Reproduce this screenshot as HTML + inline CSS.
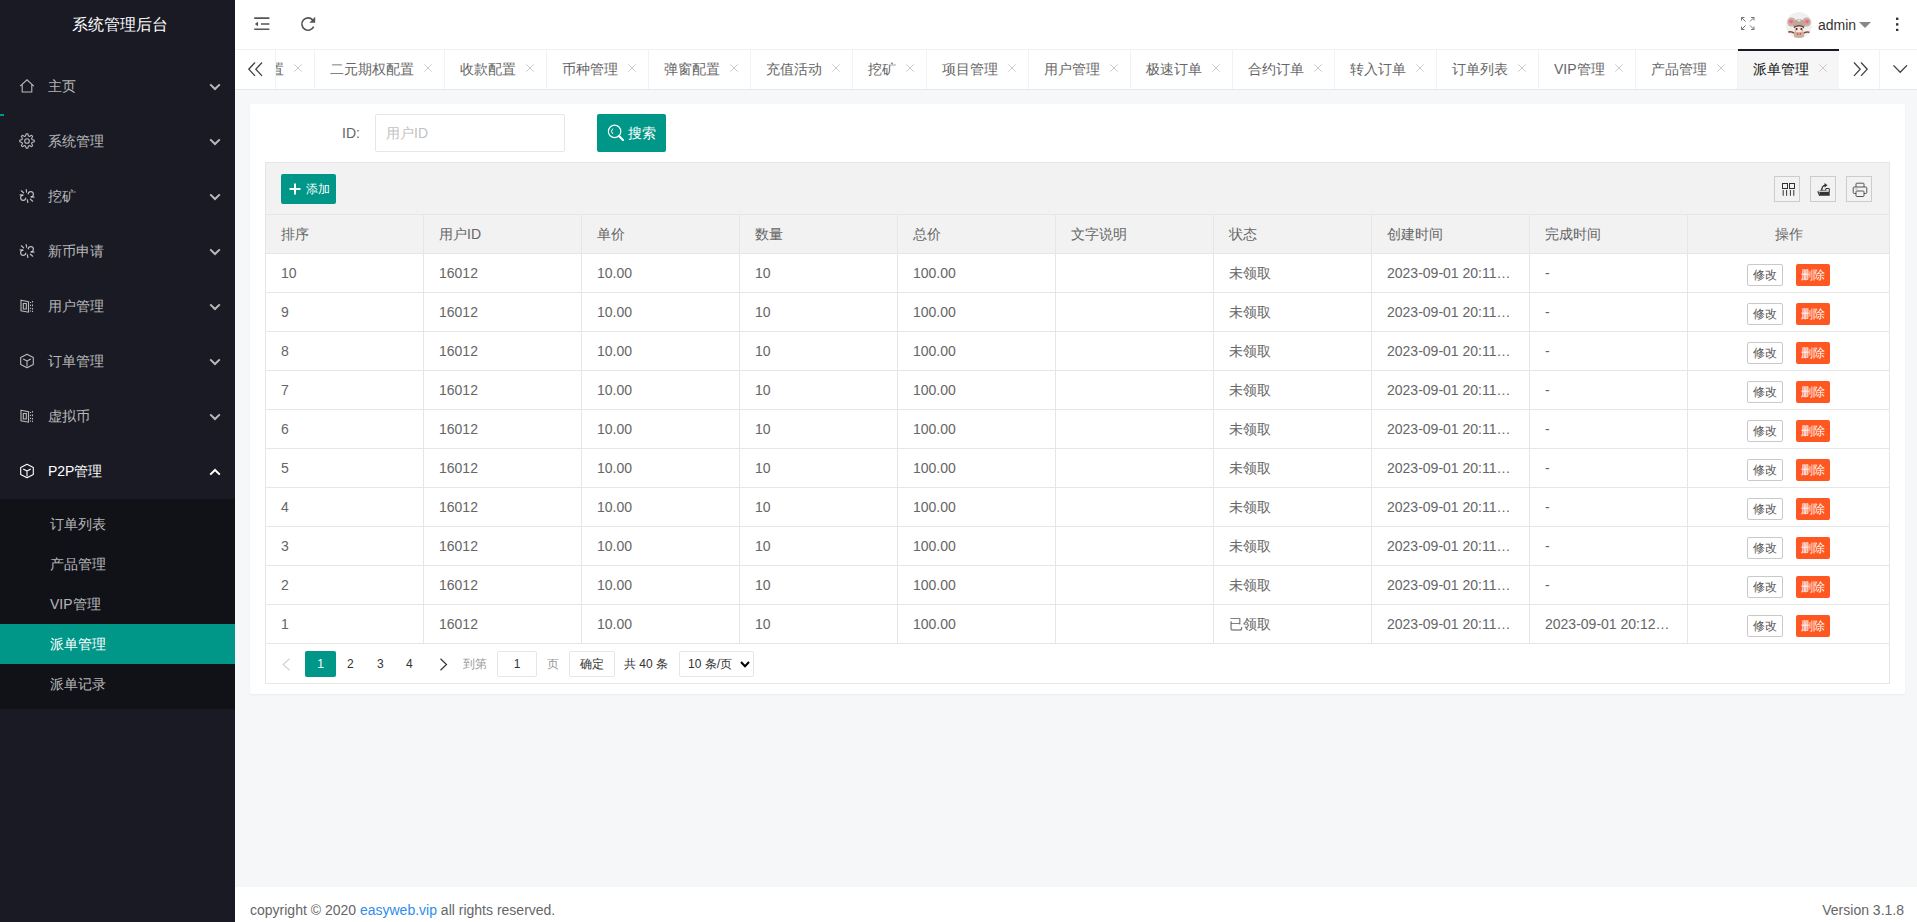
<!DOCTYPE html>
<html><head><meta charset="utf-8">
<style>
*{box-sizing:border-box;margin:0;padding:0}
html,body{width:1917px;height:922px;overflow:hidden;font-family:"Liberation Sans",sans-serif;font-size:14px;color:#666;background:#f5f7f9;position:relative}
svg{display:block}
#side{position:absolute;left:0;top:0;width:235px;height:922px;background:#191a23;overflow:hidden}
#logo{position:absolute;left:0;top:0;width:240px;height:50px;line-height:50px;text-align:center;color:#fff;font-size:16px}
.ni{position:absolute;left:0;width:235px;height:55px;line-height:55px;color:rgba(255,255,255,.7);padding-left:48px}
.ni svg.ic{position:absolute;left:19px;top:19px}
.ni .chev{position:absolute;left:209px;top:24px}
.ni.open{color:#fff}
#dd{position:absolute;left:0;top:499px;width:235px;height:210px;background:rgba(0,0,0,.3);padding:5px 0}
#dd div{height:40px;line-height:40px;padding-left:50px;color:rgba(255,255,255,.7)}
#dd div.on{background:#009688;color:#fff}
#navbar{position:absolute;left:0;top:114px;width:4px;height:2px;background:#009688}
#header{position:absolute;left:235px;top:0;width:1682px;height:50px;background:#fff}
#header .hi{position:absolute}
#tabs{position:absolute;left:235px;top:49px;width:1682px;height:41px;background:#fff;border-top:1px solid #f1f1f1;border-bottom:1px solid #e6e7ea}
#tabwrap{position:absolute;left:41px;top:0;width:1563px;height:39px;overflow:hidden}
.tab{position:absolute;top:0;height:39px;line-height:39px;border-right:1px solid #f2f2f2;padding-left:15px;white-space:nowrap;color:#666;overflow:hidden}
.tab .x{position:absolute;right:12px;top:14px;color:#c6c6c6}
.tab.part .xx .x{position:static;margin-top:16px}
.tab.act{background:#f6f6f6;color:#111}

.tbtn{position:absolute;top:0;height:39px}
#body{position:absolute;left:235px;top:90px;width:1682px;height:797px;background:#f5f7f9}
#card{position:absolute;left:250px;top:104px;width:1655px;height:590px;background:#fff;border-radius:2px;box-shadow:0 1px 2px rgba(0,0,0,.05)}
#lbl{position:absolute;left:342px;top:114px;height:38px;line-height:38px;color:#666}
#inp{position:absolute;left:375px;top:114px;width:190px;height:38px;border:1px solid #e6e6e6;border-radius:2px;line-height:36px;padding-left:10px;color:#c2c2c2}
#sbtn{position:absolute;left:597px;top:114px;width:69px;height:38px;background:#009688;border-radius:2px;color:#fff;line-height:38px}
#tbl{position:absolute;left:265px;top:162px;width:1625px;height:522px;border:1px solid #e6e6e6;background:#fff}
#tool{position:absolute;left:0;top:0;width:1623px;height:52px;background:#f2f2f2;border-bottom:1px solid #e6e6e6}
#addbtn{position:absolute;left:15px;top:11px;width:55px;height:30px;background:#009688;border-radius:2px;color:#fff;font-size:12px;line-height:30px}
.tico{position:absolute;top:13px;width:26px;height:26px;border:1px solid #ccc;color:#333}
.tr{position:absolute;left:0;width:1623px;height:39px;border-bottom:1px solid #e6e6e6}
.tr.th{background:#f2f2f2}
.c{position:absolute;top:0;height:38px;line-height:38px;padding:0 15px;border-right:1px solid #e6e6e6;white-space:nowrap;overflow:hidden;text-overflow:ellipsis;color:#666}
.c:nth-child(10){border-right:none}
.ctr{text-align:center}
.bx{display:inline-block;height:22px;line-height:20px;padding:0 5px;font-size:12px;border-radius:2px;vertical-align:middle;margin-top:2px}
.bp{border:1px solid #c9c9c9;color:#555;background:#fff}
.bd{background:#ff5722;color:#fff;border:none;line-height:22px;margin-left:13px}
#page{position:absolute;left:0;top:481px;width:1622px;height:40px;font-size:12px;color:#333}
#page .p{position:absolute}
#footer{position:absolute;left:235px;top:887px;width:1682px;height:44px;background:#fff;color:#666;line-height:46px;padding:0 15px}
#footer a{color:#2e8ded;text-decoration:none}
</style></head><body>
<div id="side">
  <div id="logo">系统管理后台</div>
  <div class="ni" style="top:59px"><svg class="ic" width="16" height="16" viewBox="0 0 16 16"><path d="M1.2 8.2 L8 1.8 L14.8 8.2 M3.2 6.8 V14 H12.8 V6.8" fill="none" stroke="currentColor" stroke-width="1.1"/></svg><span>主页</span><svg class="chev" width="12" height="8" viewBox="0 0 12 8"><path d="M1.2 1.4 L6 6 L10.8 1.4" fill="none" stroke="currentColor" stroke-width="2"/></svg></div><div class="ni" style="top:114px"><svg class="ic" width="16" height="16" viewBox="0 0 16 16"><path d="M7.28 0.74 L8.72 0.74 L9.51 3.02 L10.45 3.41 L12.63 2.36 L13.64 3.37 L12.59 5.55 L12.98 6.49 L15.26 7.28 L15.26 8.72 L12.98 9.51 L12.59 10.45 L13.64 12.63 L12.63 13.64 L10.45 12.59 L9.51 12.98 L8.72 15.26 L7.28 15.26 L6.49 12.98 L5.55 12.59 L3.37 13.64 L2.36 12.63 L3.41 10.45 L3.02 9.51 L0.74 8.72 L0.74 7.28 L3.02 6.49 L3.41 5.55 L2.36 3.37 L3.37 2.36 L5.55 3.41 L6.49 3.02 Z" fill="none" stroke="currentColor" stroke-width="1.1" stroke-linejoin="round"/><circle cx="8" cy="8" r="2.3" fill="none" stroke="currentColor" stroke-width="1.1"/></svg><span>系统管理</span><svg class="chev" width="12" height="8" viewBox="0 0 12 8"><path d="M1.2 1.4 L6 6 L10.8 1.4" fill="none" stroke="currentColor" stroke-width="2"/></svg></div><div class="ni" style="top:169px"><svg class="ic" width="16" height="16" viewBox="0 0 16 16"><g fill="none" stroke="currentColor" stroke-width="1.2" stroke-linecap="round"><path d="M9.2 5.8 A2.6 2.6 0 1 1 12 8.8"/><path d="M6.8 10.2 A2.6 2.6 0 1 1 4 7.2"/><path d="M7.2 1.5 L7.6 4.2"/><path d="M2.3 2.8 L4.6 4.8"/><path d="M1 6.8 L3.6 7"/><path d="M8.8 14.5 L8.4 11.8"/><path d="M13.7 13.2 L11.4 11.2"/><path d="M15 9.2 L12.4 9"/></g></svg><span>挖矿</span><svg class="chev" width="12" height="8" viewBox="0 0 12 8"><path d="M1.2 1.4 L6 6 L10.8 1.4" fill="none" stroke="currentColor" stroke-width="2"/></svg></div><div class="ni" style="top:224px"><svg class="ic" width="16" height="16" viewBox="0 0 16 16"><g fill="none" stroke="currentColor" stroke-width="1.2" stroke-linecap="round"><path d="M9.2 5.8 A2.6 2.6 0 1 1 12 8.8"/><path d="M6.8 10.2 A2.6 2.6 0 1 1 4 7.2"/><path d="M7.2 1.5 L7.6 4.2"/><path d="M2.3 2.8 L4.6 4.8"/><path d="M1 6.8 L3.6 7"/><path d="M8.8 14.5 L8.4 11.8"/><path d="M13.7 13.2 L11.4 11.2"/><path d="M15 9.2 L12.4 9"/></g></svg><span>新币申请</span><svg class="chev" width="12" height="8" viewBox="0 0 12 8"><path d="M1.2 1.4 L6 6 L10.8 1.4" fill="none" stroke="currentColor" stroke-width="2"/></svg></div><div class="ni" style="top:279px"><svg class="ic" width="16" height="16" viewBox="0 0 16 16"><g fill="none" stroke="currentColor" stroke-width="1.1"><path d="M2 2.2 L9.5 3.8 V14.2 L2 12.8 Z"/><path d="M4.3 5.5 H7.3 V11 H4.3 Z"/><path d="M11.5 4 V5 M11.5 6.8 V8 M11.5 9.8 V11 M11.5 12.6 V13.6 M13.5 3 V4.6 M13.5 6.6 V8.3 M13.5 10 V11.5 M13.5 12.8 V14"/></g></svg><span>用户管理</span><svg class="chev" width="12" height="8" viewBox="0 0 12 8"><path d="M1.2 1.4 L6 6 L10.8 1.4" fill="none" stroke="currentColor" stroke-width="2"/></svg></div><div class="ni" style="top:334px"><svg class="ic" width="16" height="16" viewBox="0 0 16 16"><g fill="none" stroke="currentColor" stroke-width="1.1" stroke-linejoin="round"><path d="M8 1.2 L14.3 4.5 V11.5 L8 14.8 L1.7 11.5 V4.5 Z"/><path d="M4.2 6 L8 8 L11.8 6 M8 8 V13.5"/></g></svg><span>订单管理</span><svg class="chev" width="12" height="8" viewBox="0 0 12 8"><path d="M1.2 1.4 L6 6 L10.8 1.4" fill="none" stroke="currentColor" stroke-width="2"/></svg></div><div class="ni" style="top:389px"><svg class="ic" width="16" height="16" viewBox="0 0 16 16"><g fill="none" stroke="currentColor" stroke-width="1.1"><path d="M2 2.2 L9.5 3.8 V14.2 L2 12.8 Z"/><path d="M4.3 5.5 H7.3 V11 H4.3 Z"/><path d="M11.5 4 V5 M11.5 6.8 V8 M11.5 9.8 V11 M11.5 12.6 V13.6 M13.5 3 V4.6 M13.5 6.6 V8.3 M13.5 10 V11.5 M13.5 12.8 V14"/></g></svg><span>虚拟币</span><svg class="chev" width="12" height="8" viewBox="0 0 12 8"><path d="M1.2 1.4 L6 6 L10.8 1.4" fill="none" stroke="currentColor" stroke-width="2"/></svg></div><div class="ni open" style="top:444px"><svg class="ic" width="16" height="16" viewBox="0 0 16 16"><g fill="none" stroke="currentColor" stroke-width="1.1" stroke-linejoin="round"><path d="M8 1.2 L14.3 4.5 V11.5 L8 14.8 L1.7 11.5 V4.5 Z"/><path d="M4.2 6 L8 8 L11.8 6 M8 8 V13.5"/></g></svg><span>P2P管理</span><svg class="chev" width="12" height="8" viewBox="0 0 12 8"><path d="M1.2 6.6 L6 2 L10.8 6.6" fill="none" stroke="currentColor" stroke-width="2"/></svg></div>
  <div id="dd"><div>订单列表</div><div>产品管理</div><div>VIP管理</div><div class="on">派单管理</div><div>派单记录</div></div>
  <div id="navbar"></div>
</div>
<div id="header">
  <svg class="hi" style="left:19px;top:16px" width="16" height="16" viewBox="0 0 16 16"><g stroke="#555" stroke-width="1.6" fill="none"><path d="M0.2 2.1 H15.4 M7 8 H15.4 M0.2 13.3 H15.4"/></g><path d="M4 5.8 V10.2 L0.9 8 Z" fill="#555"/></svg>
  <svg class="hi" style="left:65px;top:16px" width="17" height="17" viewBox="0 0 17 17"><path d="M13.7 10.7 A6.2 6.2 0 1 1 12.7 3.9" fill="none" stroke="#555" stroke-width="1.6"/><path d="M15.2 0.8 L15.2 6.8 L9.4 6.8 Z" fill="#555"/></svg>
  <svg class="hi" style="left:1506px;top:17px" width="14" height="14" viewBox="0 0 14 14"><g stroke="#777" stroke-width="1" fill="none"><path d="M0.5 3.5 V0.5 H3.5 M0.5 0.5 L4.5 4.5"/><path d="M10 0.5 H13 V3.5 M13 0.5 L9 4.5"/><path d="M0.5 9.5 V12.5 H3.5 M0.5 12.5 L4.5 8.5"/><path d="M13 9.5 V12.5 H10 M13 12.5 L9 8.5"/></g></svg>
  <div class="hi" style="left:1551px;top:12px;width:26px;height:26px;border-radius:50%;background:#f1f0f0;overflow:hidden">
    <svg width="26" height="26" viewBox="0 0 26 26"><ellipse cx="5.6" cy="10" rx="4.3" ry="4.6" fill="#c9aea3"/><ellipse cx="20.6" cy="10" rx="4.3" ry="4.6" fill="#c9aea3"/><ellipse cx="5.2" cy="9.6" rx="2" ry="1.8" fill="#f06a8a"/><ellipse cx="21" cy="9.6" rx="2" ry="1.8" fill="#f06a8a"/><rect x="8" y="19" width="10" height="7.5" rx="2" fill="#c9aea3"/><ellipse cx="13" cy="12.5" rx="6" ry="5.5" fill="#c3a597"/><ellipse cx="13" cy="8.5" rx="1.6" ry="1" fill="#f3e6e2"/><path d="M7.8 14.5 Q13 11.5 18.2 14.5 L18 16 H8 Z" fill="#6a4a3e"/><ellipse cx="13" cy="17.4" rx="4.6" ry="2.8" fill="#f6e4de"/><circle cx="10.6" cy="17" r="1.05" fill="#3a2420"/><circle cx="15.4" cy="17" r="1.05" fill="#3a2420"/><circle cx="9.6" cy="18.6" r="0.9" fill="#f5a080"/><circle cx="16.4" cy="18.6" r="0.9" fill="#f5a080"/><path d="M2.3 20 Q5 19.4 8 21 M23.7 20.4 Q21 19.4 18 21" stroke="#7a5040" stroke-width="1.5" fill="none"/><circle cx="3" cy="20.6" r="0.7" fill="#e03030"/><circle cx="23.2" cy="21" r="0.7" fill="#e03030"/><path d="M11 20.5 L13 22 L15 20.5 L15 23 L13 22 L11 23 Z" fill="#f04a20"/></svg>
  </div>
  <div class="hi" style="left:1583px;top:0;line-height:50px;color:#333;font-size:14px">admin</div>
  <svg class="hi" style="left:1624px;top:22px" width="12" height="6" viewBox="0 0 12 6"><path d="M0 0 H12 L6 6 Z" fill="#888"/></svg>
  <svg class="hi" style="left:1661px;top:17px" width="3" height="14" viewBox="0 0 3 14"><g fill="#333"><rect x="0" y="0.6" width="2.4" height="2.4"/><rect x="0" y="6.2" width="2.4" height="2.4"/><rect x="0" y="11.8" width="2.4" height="2.4"/></g></svg>
</div>
<div id="body"></div>
<div id="tabs">
  <div class="tbtn" style="left:0;width:41px;border-right:1px solid #f2f2f2"><svg style="position:absolute;left:13px;top:12px" width="15" height="15" viewBox="0 0 15 15"><path d="M7 0.5 L0.8 7.2 L7 13.9 M14 0.5 L7.8 7.2 L14 13.9" fill="none" stroke="#444" stroke-width="1.3"/></svg></div>
  <div id="tabwrap"><div class="tab" style="left:-63px;width:102px"><span class="tt">二元配置</span><svg class="x" width="8" height="8" viewBox="0 0 8 8"><path d="M0.3 0.3 L7.7 7.7 M7.7 0.3 L0.3 7.7" stroke="currentColor" stroke-width="0.9" fill="none"/></svg></div><div class="tab" style="left:39px;width:130px"><span class="tt">二元期权配置</span><svg class="x" width="8" height="8" viewBox="0 0 8 8"><path d="M0.3 0.3 L7.7 7.7 M7.7 0.3 L0.3 7.7" stroke="currentColor" stroke-width="0.9" fill="none"/></svg></div><div class="tab" style="left:169px;width:102px"><span class="tt">收款配置</span><svg class="x" width="8" height="8" viewBox="0 0 8 8"><path d="M0.3 0.3 L7.7 7.7 M7.7 0.3 L0.3 7.7" stroke="currentColor" stroke-width="0.9" fill="none"/></svg></div><div class="tab" style="left:271px;width:102px"><span class="tt">币种管理</span><svg class="x" width="8" height="8" viewBox="0 0 8 8"><path d="M0.3 0.3 L7.7 7.7 M7.7 0.3 L0.3 7.7" stroke="currentColor" stroke-width="0.9" fill="none"/></svg></div><div class="tab" style="left:373px;width:102px"><span class="tt">弹窗配置</span><svg class="x" width="8" height="8" viewBox="0 0 8 8"><path d="M0.3 0.3 L7.7 7.7 M7.7 0.3 L0.3 7.7" stroke="currentColor" stroke-width="0.9" fill="none"/></svg></div><div class="tab" style="left:475px;width:102px"><span class="tt">充值活动</span><svg class="x" width="8" height="8" viewBox="0 0 8 8"><path d="M0.3 0.3 L7.7 7.7 M7.7 0.3 L0.3 7.7" stroke="currentColor" stroke-width="0.9" fill="none"/></svg></div><div class="tab" style="left:577px;width:74px"><span class="tt">挖矿</span><svg class="x" width="8" height="8" viewBox="0 0 8 8"><path d="M0.3 0.3 L7.7 7.7 M7.7 0.3 L0.3 7.7" stroke="currentColor" stroke-width="0.9" fill="none"/></svg></div><div class="tab" style="left:651px;width:102px"><span class="tt">项目管理</span><svg class="x" width="8" height="8" viewBox="0 0 8 8"><path d="M0.3 0.3 L7.7 7.7 M7.7 0.3 L0.3 7.7" stroke="currentColor" stroke-width="0.9" fill="none"/></svg></div><div class="tab" style="left:753px;width:102px"><span class="tt">用户管理</span><svg class="x" width="8" height="8" viewBox="0 0 8 8"><path d="M0.3 0.3 L7.7 7.7 M7.7 0.3 L0.3 7.7" stroke="currentColor" stroke-width="0.9" fill="none"/></svg></div><div class="tab" style="left:855px;width:102px"><span class="tt">极速订单</span><svg class="x" width="8" height="8" viewBox="0 0 8 8"><path d="M0.3 0.3 L7.7 7.7 M7.7 0.3 L0.3 7.7" stroke="currentColor" stroke-width="0.9" fill="none"/></svg></div><div class="tab" style="left:957px;width:102px"><span class="tt">合约订单</span><svg class="x" width="8" height="8" viewBox="0 0 8 8"><path d="M0.3 0.3 L7.7 7.7 M7.7 0.3 L0.3 7.7" stroke="currentColor" stroke-width="0.9" fill="none"/></svg></div><div class="tab" style="left:1059px;width:102px"><span class="tt">转入订单</span><svg class="x" width="8" height="8" viewBox="0 0 8 8"><path d="M0.3 0.3 L7.7 7.7 M7.7 0.3 L0.3 7.7" stroke="currentColor" stroke-width="0.9" fill="none"/></svg></div><div class="tab" style="left:1161px;width:102px"><span class="tt">订单列表</span><svg class="x" width="8" height="8" viewBox="0 0 8 8"><path d="M0.3 0.3 L7.7 7.7 M7.7 0.3 L0.3 7.7" stroke="currentColor" stroke-width="0.9" fill="none"/></svg></div><div class="tab" style="left:1263px;width:97px"><span class="tt">VIP管理</span><svg class="x" width="8" height="8" viewBox="0 0 8 8"><path d="M0.3 0.3 L7.7 7.7 M7.7 0.3 L0.3 7.7" stroke="currentColor" stroke-width="0.9" fill="none"/></svg></div><div class="tab" style="left:1360px;width:102px"><span class="tt">产品管理</span><svg class="x" width="8" height="8" viewBox="0 0 8 8"><path d="M0.3 0.3 L7.7 7.7 M7.7 0.3 L0.3 7.7" stroke="currentColor" stroke-width="0.9" fill="none"/></svg></div><div class="tab act" style="left:1462px;width:102px"><span class="tt">派单管理</span><svg class="x" width="8" height="8" viewBox="0 0 8 8"><path d="M0.3 0.3 L7.7 7.7 M7.7 0.3 L0.3 7.7" stroke="currentColor" stroke-width="0.9" fill="none"/></svg></div></div>
  <div style="position:absolute;left:1503px;top:-1px;width:101px;height:2px;background:#191a23"></div><div class="tbtn" style="left:1605px;width:40px;border-right:1px solid #f2f2f2"><svg style="position:absolute;left:13px;top:12px" width="15" height="15" viewBox="0 0 15 15"><path d="M1 0.5 L7.2 7.2 L1 13.9 M8 0.5 L14.2 7.2 L8 13.9" fill="none" stroke="#444" stroke-width="1.3"/></svg></div>
  <div class="tbtn" style="left:1645px;width:37px"><svg style="position:absolute;left:13px;top:15px" width="15" height="9" viewBox="0 0 15 9"><path d="M0.4 0.3 L7.2 7.3 L14 0.3" fill="none" stroke="#444" stroke-width="1.3"/></svg></div>
</div>
<div id="card"></div>
<div id="lbl">ID:</div>
<div id="inp">用户ID</div>
<div id="sbtn"><svg style="position:absolute;left:10px;top:10px" width="18" height="18" viewBox="0 0 18 18"><circle cx="7.6" cy="7.4" r="6.2" fill="none" stroke="#fff" stroke-width="1.2"/><path d="M5.8 4.6 Q3.0 7.25 5.8 9.9" fill="none" stroke="#fff" stroke-width="1"/><path d="M12 12 L16 16" stroke="#fff" stroke-width="2.2" stroke-linecap="round"/></svg><span style="position:absolute;left:31px;top:0">搜索</span></div>
<div id="tbl">
  <div id="tool">
    <div id="addbtn"><svg style="position:absolute;left:8px;top:9px" width="12" height="12" viewBox="0 0 12 12"><path d="M6 0.5 V11.5 M0.5 6 H11.5" stroke="#fff" stroke-width="2"/></svg><span style="position:absolute;left:25px;top:0">添加</span></div>
    <div class="tico" style="left:1508px"><svg style="position:absolute;left:7px;top:6px" width="14" height="14" viewBox="0 0 14 14"><g fill="none" stroke="#333" stroke-width="1"><rect x="0.5" y="0.5" width="5" height="5"/><rect x="7.5" y="0.5" width="5" height="5"/><path d="M1.2 7 V12.8 M4.6 7 V12.8 M8.4 7 V12.8 M11.8 7 V12.8"/></g></svg></div>
    <div class="tico" style="left:1544px"><svg style="position:absolute;left:6px;top:5px" width="14" height="16" viewBox="0 0 14 16"><path d="M2.3 10 H12.7 V13.8 H2.7 Z" fill="#333"/><path d="M0.8 9.3 L2.6 13.8" stroke="#333" stroke-width="1.1" fill="none"/><path d="M1.3 9 H12.2" stroke="#9a9a9a" stroke-width="0.9"/><path d="M3 8.2 H8.6" stroke="#555" stroke-width="0.7"/><path d="M8.8 8.6 V6.5 H12.3 V10" stroke="#333" stroke-width="1" fill="none"/><path d="M4.7 8.4 Q4.8 3.7 8 3.3" stroke="#333" stroke-width="1.3" fill="none"/><path d="M7.5 1.1 L10.5 3.3 L7.5 5.5 Z" fill="#333"/></svg></div>
    <div class="tico" style="left:1580px"><svg style="position:absolute;left:5px;top:5px" width="16" height="16" viewBox="0 0 16 16"><g fill="none" stroke="#555" stroke-width="1"><path d="M4 5 V2 Q4 1.2 4.8 1.2 H11.2 Q12 1.2 12 2 V5"/><path d="M4 11.5 H2.2 Q1.2 11.5 1.2 10.5 V6 Q1.2 5 2.2 5 H13.8 Q14.8 5 14.8 6 V10.5 Q14.8 11.5 13.8 11.5 H12"/><rect x="4" y="9" width="8" height="5.5" rx="0.8"/></g><path d="M3 7 H6" stroke="#bbb" stroke-width="1"/></svg></div>
  </div>
  <div class="tr th" style="top:52px"><div class="c" style="left:0px;width:158px">排序</div><div class="c" style="left:158px;width:158px">用户ID</div><div class="c" style="left:316px;width:158px">单价</div><div class="c" style="left:474px;width:158px">数量</div><div class="c" style="left:632px;width:158px">总价</div><div class="c" style="left:790px;width:158px">文字说明</div><div class="c" style="left:948px;width:158px">状态</div><div class="c" style="left:1106px;width:158px">创建时间</div><div class="c" style="left:1264px;width:158px">完成时间</div><div class="c ctr" style="left:1422px;width:201px">操作</div></div>
  <div class="tr" style="top:91px"><div class="c" style="left:0px;width:158px">10</div><div class="c" style="left:158px;width:158px">16012</div><div class="c" style="left:316px;width:158px">10.00</div><div class="c" style="left:474px;width:158px">10</div><div class="c" style="left:632px;width:158px">100.00</div><div class="c" style="left:790px;width:158px"></div><div class="c" style="left:948px;width:158px">未领取</div><div class="c" style="left:1106px;width:158px">2023-09-01 20:11:36</div><div class="c" style="left:1264px;width:158px">-</div><div class="c ctr" style="left:1422px;width:201px"><span class="bx bp">修改</span><span class="bx bd">删除</span></div></div><div class="tr" style="top:130px"><div class="c" style="left:0px;width:158px">9</div><div class="c" style="left:158px;width:158px">16012</div><div class="c" style="left:316px;width:158px">10.00</div><div class="c" style="left:474px;width:158px">10</div><div class="c" style="left:632px;width:158px">100.00</div><div class="c" style="left:790px;width:158px"></div><div class="c" style="left:948px;width:158px">未领取</div><div class="c" style="left:1106px;width:158px">2023-09-01 20:11:36</div><div class="c" style="left:1264px;width:158px">-</div><div class="c ctr" style="left:1422px;width:201px"><span class="bx bp">修改</span><span class="bx bd">删除</span></div></div><div class="tr" style="top:169px"><div class="c" style="left:0px;width:158px">8</div><div class="c" style="left:158px;width:158px">16012</div><div class="c" style="left:316px;width:158px">10.00</div><div class="c" style="left:474px;width:158px">10</div><div class="c" style="left:632px;width:158px">100.00</div><div class="c" style="left:790px;width:158px"></div><div class="c" style="left:948px;width:158px">未领取</div><div class="c" style="left:1106px;width:158px">2023-09-01 20:11:36</div><div class="c" style="left:1264px;width:158px">-</div><div class="c ctr" style="left:1422px;width:201px"><span class="bx bp">修改</span><span class="bx bd">删除</span></div></div><div class="tr" style="top:208px"><div class="c" style="left:0px;width:158px">7</div><div class="c" style="left:158px;width:158px">16012</div><div class="c" style="left:316px;width:158px">10.00</div><div class="c" style="left:474px;width:158px">10</div><div class="c" style="left:632px;width:158px">100.00</div><div class="c" style="left:790px;width:158px"></div><div class="c" style="left:948px;width:158px">未领取</div><div class="c" style="left:1106px;width:158px">2023-09-01 20:11:36</div><div class="c" style="left:1264px;width:158px">-</div><div class="c ctr" style="left:1422px;width:201px"><span class="bx bp">修改</span><span class="bx bd">删除</span></div></div><div class="tr" style="top:247px"><div class="c" style="left:0px;width:158px">6</div><div class="c" style="left:158px;width:158px">16012</div><div class="c" style="left:316px;width:158px">10.00</div><div class="c" style="left:474px;width:158px">10</div><div class="c" style="left:632px;width:158px">100.00</div><div class="c" style="left:790px;width:158px"></div><div class="c" style="left:948px;width:158px">未领取</div><div class="c" style="left:1106px;width:158px">2023-09-01 20:11:36</div><div class="c" style="left:1264px;width:158px">-</div><div class="c ctr" style="left:1422px;width:201px"><span class="bx bp">修改</span><span class="bx bd">删除</span></div></div><div class="tr" style="top:286px"><div class="c" style="left:0px;width:158px">5</div><div class="c" style="left:158px;width:158px">16012</div><div class="c" style="left:316px;width:158px">10.00</div><div class="c" style="left:474px;width:158px">10</div><div class="c" style="left:632px;width:158px">100.00</div><div class="c" style="left:790px;width:158px"></div><div class="c" style="left:948px;width:158px">未领取</div><div class="c" style="left:1106px;width:158px">2023-09-01 20:11:36</div><div class="c" style="left:1264px;width:158px">-</div><div class="c ctr" style="left:1422px;width:201px"><span class="bx bp">修改</span><span class="bx bd">删除</span></div></div><div class="tr" style="top:325px"><div class="c" style="left:0px;width:158px">4</div><div class="c" style="left:158px;width:158px">16012</div><div class="c" style="left:316px;width:158px">10.00</div><div class="c" style="left:474px;width:158px">10</div><div class="c" style="left:632px;width:158px">100.00</div><div class="c" style="left:790px;width:158px"></div><div class="c" style="left:948px;width:158px">未领取</div><div class="c" style="left:1106px;width:158px">2023-09-01 20:11:36</div><div class="c" style="left:1264px;width:158px">-</div><div class="c ctr" style="left:1422px;width:201px"><span class="bx bp">修改</span><span class="bx bd">删除</span></div></div><div class="tr" style="top:364px"><div class="c" style="left:0px;width:158px">3</div><div class="c" style="left:158px;width:158px">16012</div><div class="c" style="left:316px;width:158px">10.00</div><div class="c" style="left:474px;width:158px">10</div><div class="c" style="left:632px;width:158px">100.00</div><div class="c" style="left:790px;width:158px"></div><div class="c" style="left:948px;width:158px">未领取</div><div class="c" style="left:1106px;width:158px">2023-09-01 20:11:36</div><div class="c" style="left:1264px;width:158px">-</div><div class="c ctr" style="left:1422px;width:201px"><span class="bx bp">修改</span><span class="bx bd">删除</span></div></div><div class="tr" style="top:403px"><div class="c" style="left:0px;width:158px">2</div><div class="c" style="left:158px;width:158px">16012</div><div class="c" style="left:316px;width:158px">10.00</div><div class="c" style="left:474px;width:158px">10</div><div class="c" style="left:632px;width:158px">100.00</div><div class="c" style="left:790px;width:158px"></div><div class="c" style="left:948px;width:158px">未领取</div><div class="c" style="left:1106px;width:158px">2023-09-01 20:11:36</div><div class="c" style="left:1264px;width:158px">-</div><div class="c ctr" style="left:1422px;width:201px"><span class="bx bp">修改</span><span class="bx bd">删除</span></div></div><div class="tr" style="top:442px"><div class="c" style="left:0px;width:158px">1</div><div class="c" style="left:158px;width:158px">16012</div><div class="c" style="left:316px;width:158px">10.00</div><div class="c" style="left:474px;width:158px">10</div><div class="c" style="left:632px;width:158px">100.00</div><div class="c" style="left:790px;width:158px"></div><div class="c" style="left:948px;width:158px">已领取</div><div class="c" style="left:1106px;width:158px">2023-09-01 20:11:36</div><div class="c" style="left:1264px;width:158px">2023-09-01 20:12:08</div><div class="c ctr" style="left:1422px;width:201px"><span class="bx bp">修改</span><span class="bx bd">删除</span></div></div>
  <div id="page">
    <svg class="p" style="left:16px;top:14px" width="9" height="13" viewBox="0 0 9 13"><path d="M7.5 0.8 L1.2 6.5 L7.5 12.2" fill="none" stroke="#d2d2d2" stroke-width="1.2"/></svg>
    <div class="p" style="left:39px;top:7px;width:31px;height:26px;background:#009688;border-radius:2px;color:#fff;text-align:center;line-height:26px">1</div>
    <div class="p" style="left:81px;top:7px;line-height:26px">2</div>
    <div class="p" style="left:111px;top:7px;line-height:26px">3</div>
    <div class="p" style="left:140px;top:7px;line-height:26px">4</div>
    <svg class="p" style="left:173px;top:14px" width="9" height="13" viewBox="0 0 9 13"><path d="M1.5 0.8 L7.5 6.5 L1.5 12.2" fill="none" stroke="#333" stroke-width="1.2"/></svg>
    <div class="p" style="left:197px;top:7px;line-height:26px;color:#999">到第</div>
    <div class="p" style="left:231px;top:7px;width:40px;height:26px;border:1px solid #e6e6e6;border-radius:2px;text-align:center;line-height:24px;color:#333">1</div>
    <div class="p" style="left:281px;top:7px;line-height:26px;color:#999">页</div>
    <div class="p" style="left:303px;top:7px;width:46px;height:26px;border:1px solid #e6e6e6;border-radius:2px;text-align:center;line-height:24px;color:#333">确定</div>
    <div class="p" style="left:358px;top:7px;line-height:26px;color:#333">共 40 条</div>
    <div class="p" style="left:413px;top:7px;width:75px;height:26px;border:1px solid #e6e6e6;border-radius:2px;line-height:24px;padding-left:8px;color:#333">10 条/页<svg style="position:absolute;left:60px;top:9px" width="10" height="7" viewBox="0 0 10 7"><path d="M1 1 L5 5.2 L9 1" fill="none" stroke="#000" stroke-width="2"/></svg></div>
  </div>
</div>
<div id="footer">copyright © 2020 <a>easyweb.vip</a> all rights reserved.<span style="position:absolute;right:13px;top:0">Version 3.1.8</span></div>
</body></html>
